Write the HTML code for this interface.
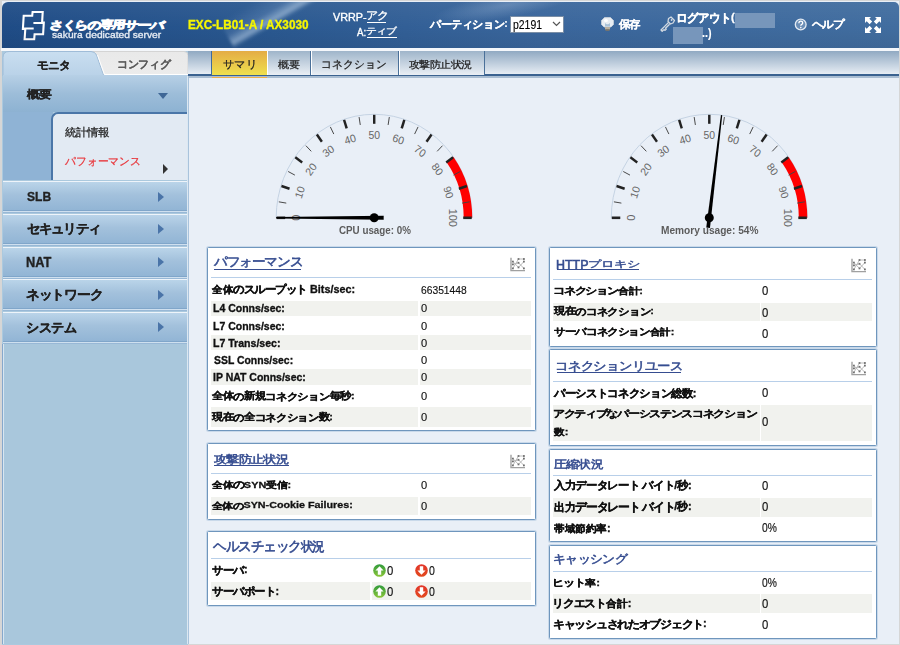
<!DOCTYPE html>
<html lang="ja">
<head>
<meta charset="utf-8">
<style>
*{box-sizing:border-box}
html,body{margin:0;padding:0}
body{width:900px;height:645px;overflow:hidden;position:relative;background:#e9eff7;font-family:"Liberation Sans",sans-serif;color:#111}
.a{position:absolute}
.t{position:absolute;white-space:nowrap;transform-origin:0 0;line-height:1}
#frame{left:0;top:0;width:900px;height:645px;border:1px solid #d6d6d6;border-left-width:2px}
#hdr{left:2px;top:2px;width:897px;height:46px;border-radius:6px 5px 0 0;
 background:linear-gradient(90deg,#1f4c86 0%,#2a5890 30%,#3a669c 60%,#416d9f 100%);overflow:hidden}
#strip{left:1px;top:48px;width:898px;height:3px;background:#f4f7fb}
#side{left:2px;top:51px;width:186px;height:594px;background:#abc9de}
#tabmon{left:3px;top:51px;width:100px;height:25px;border-radius:6px 8px 0 0;background:linear-gradient(#c8ddef,#bad3e8);border:1px solid #8fb0cf;border-bottom:none}
#tabcfg{left:98px;top:51px;width:90px;height:24px;background:#e6e6e6;border-radius:0 5px 0 0;border-top:1px solid #d0d0d0}
#gaiyo{left:3px;top:75px;width:185px;height:37px;background:linear-gradient(#b7d0e6 0%,#9dbdd9 50%,#8db2d2 100%)}
#subleft{left:3px;top:112px;width:50px;height:68px;background:#8fb3d5}
#sub{left:51px;top:112px;width:137px;height:68px;background:#e2eaf3;border-radius:7px 0 0 0;border-left:2px solid #4a76a8;border-top:2px solid #4a76a8}
.mrow{left:3px;width:184px;height:30px;background:linear-gradient(#bad4e9 0%,#a3c1dc 45%,#92b5d5 100%);border-top:1px solid #eef4fa;border-bottom:1px solid #80a6ca;box-shadow:0 1px 0 #cfe0ef,0 2px 0 #98b8d6}
.arr{width:0;height:0;border-top:5px solid transparent;border-bottom:5px solid transparent;border-left:6px solid #4a74a8}
#stbar{left:188px;top:51px;width:711px;height:27px;background:linear-gradient(#90a9c2 0%,#e7edf4 85%,#3b6290 85%,#3b6290 93%,#a9bdd2 93%,#a9bdd2 100%)}
.stab{top:51px;height:24px;background:linear-gradient(#9fb5ca,#eaeff5);border-right:1px solid #4a7099;box-shadow:inset 1px 0 0 #fff}
#stsel{left:211px;top:51px;width:56px;height:24px;background:linear-gradient(#e4ac45,#efe04e);border-left:1px solid #3f6a9e}
#stund{left:212px;top:76.5px;width:55px;height:1.8px;background:#f0b04a}
.pan{position:absolute;background:#fff;border:1px solid #6f96bd;border-radius:1.5px;box-shadow:0 0 0 1px #c9d9ea}
.sep{position:absolute;height:1px;background:#b8cfe9}
.st{position:absolute;background:#f1f2ee}
.ic{position:absolute}
</style>
</head>
<body>
<div id="frame" class="a"></div>
<div id="hdr" class="a"></div>
<div id="strip" class="a"></div>

<!-- logo -->
<svg class="a" style="left:0;top:0" width="60" height="48">
 <path d="M32.6 12 H42.7 L42.1 22.6 H43.8 L43.1 34.2 H34.6 L34.2 39.2 H24.6 L25.3 29.0 H22.9 L23.7 15.8 H32.2 Z" fill="none" stroke="#fff" stroke-width="2.1" stroke-linejoin="miter"/>
 <path d="M33.4 22.9 H43.8 M22.9 28.6 H33.7" stroke="#fff" stroke-width="2"/>
</svg>
<div class="a" style="left:2px;top:2px;width:897px;height:46px;overflow:hidden;border-radius:6px 5px 0 0;background:linear-gradient(180deg,rgba(255,255,255,.05) 0%,rgba(255,255,255,0) 55%,rgba(0,0,0,.06) 100%)"><div class="a" style="left:430px;top:-10px;width:150px;height:26px;transform:rotate(-10deg);background:radial-gradient(ellipse at 50% 50%,rgba(190,210,235,.28) 0%,rgba(190,210,235,0) 70%)"></div><div class="a" style="left:255px;top:-45px;width:40px;height:110px;transform:rotate(60deg);background:linear-gradient(90deg,rgba(170,198,230,0) 0%,rgba(170,198,230,.18) 40%,rgba(200,220,240,.55) 62%,rgba(170,198,230,0) 75%);filter:blur(1.5px)"></div></div>
<div class="a" style="left:510px;top:16px;width:54px;height:17px;background:#fff;border:1px solid #7a8ea6"></div>
<svg class="a" style="left:552px;top:21px" width="9" height="6" viewBox="0 0 9 6"><path d="M1 1 L4.5 4.5 L8 1" fill="none" stroke="#555" stroke-width="1.2"/></svg>
<svg class="a" style="left:600px;top:16px" width="16" height="16" viewBox="0 0 16 16">
 <path d="M4.5 1.5 H10.5 L13.5 4.5 V8.5 L11 11 H4 L1.5 8.5 V4.5 Z" fill="#e8edf2" stroke="#c9d2da" stroke-width="0.8"/>
 <path d="M5 7 Q7.5 9.5 10 7 V10.5 H5 Z" fill="#a9c2d8"/>
 <ellipse cx="6" cy="4.5" rx="2" ry="1.6" fill="#fff"/>
 <rect x="5" y="11" width="5" height="2.5" fill="#b8b0a0"/><rect x="5.5" y="13.3" width="4" height="1.4" fill="#8a7a60"/>
</svg>
<svg class="a" style="left:659px;top:16px" width="17" height="17" viewBox="0 0 17 17">
 <g fill="none" stroke="#d3dae2" stroke-width="1.3" stroke-linejoin="round">
 <path d="M9.5 2.5 L12 1 L15.5 4.5 L14 7 L11.5 8 L9 5.5 Z"/>
 <path d="M9.6 6.4 L2 14 L3.2 15.3 L5 13.6 L6 14.4 L7.2 13.2 L6.5 12.2 L10.6 8.2"/>
 </g>
 <circle cx="12.6" cy="4" r="0.9" fill="#d3dae2"/>
</svg>
<div class="a" style="left:735px;top:12.5px;width:40px;height:15.5px;background:#7796bb;filter:blur(0.6px)"></div>
<div class="a" style="left:673px;top:27px;width:30px;height:17px;background:#7796bb;filter:blur(0.6px)"></div>
<svg class="a" style="left:794px;top:17.5px" width="14" height="14" viewBox="0 0 14 14">
 <circle cx="6.7" cy="6.5" r="5.4" fill="rgba(190,210,230,.35)" stroke="#e4ebf3" stroke-width="1.3"/>
 <path d="M4.9 5.2 Q4.9 3.2 6.8 3.2 Q8.7 3.2 8.7 4.9 Q8.7 6 7.4 6.6 Q6.8 6.9 6.8 7.8" fill="none" stroke="#fff" stroke-width="1.3"/>
 <circle cx="6.8" cy="9.6" r="0.8" fill="#fff"/>
</svg>
<svg class="a" style="left:865px;top:17px" width="16" height="16" viewBox="0 0 16 16" fill="#fff">
 <path d="M0 0 H6 L4.3 1.7 L7.2 4.6 L4.6 7.2 L1.7 4.3 L0 6 Z"/>
 <path d="M16 0 V6 L14.3 4.3 L11.4 7.2 L8.8 4.6 L11.7 1.7 L10 0 Z"/>
 <path d="M0 16 V10 L1.7 11.7 L4.6 8.8 L7.2 11.4 L4.3 14.3 L6 16 Z"/>
 <path d="M16 16 H10 L11.7 14.3 L8.8 11.4 L11.4 8.8 L14.3 11.7 L16 10 Z"/>
</svg>

<!-- SIDEBAR -->
<div id="side" class="a"></div>
<svg class="a" style="left:0;top:0" width="200" height="80">
 <defs><linearGradient id="tmg" x1="0" y1="0" x2="0" y2="1"><stop offset="0" stop-color="#c9def0"/><stop offset="1" stop-color="#b9d2e8"/></linearGradient>
 <linearGradient id="tcg" x1="0" y1="0" x2="0" y2="1"><stop offset="0" stop-color="#e9e9e9"/><stop offset="1" stop-color="#ececec"/></linearGradient></defs>
 <path d="M90 51.5 H184 Q188 51.5 188 55.5 V75.5 H102 Z" fill="url(#tcg)" stroke="#d4d4d4" stroke-width="1"/>
 <path d="M3 76 V57.5 Q3 51.5 9 51.5 H91 Q95 51.5 96.5 55 L103.5 75.5 H188 V76 Z" fill="url(#tmg)"/>
 <path d="M3 76 V57.5 Q3 51.5 9 51.5 H91 Q95 51.5 96.5 55 L103.5 75" fill="none" stroke="#9fbcd8" stroke-width="1"/>
 <path d="M97.5 55 L104.5 74.5 H188" fill="none" stroke="#fff" stroke-width="1"/>
 <path d="M104 75.5 H188" fill="none" stroke="#86a8cb" stroke-width="1"/>
</svg>
<div id="gaiyo" class="a"></div>
<div class="a" style="left:157.7px;top:92.5px;width:0;height:0;border-left:5px solid transparent;border-right:5px solid transparent;border-top:6px solid #3f6796"></div>
<div id="subleft" class="a"></div>
<div id="sub" class="a"></div>
<div class="a" style="left:163px;top:164px;width:0;height:0;border-top:5px solid transparent;border-bottom:5px solid transparent;border-left:5px solid #333"></div>
<div class="mrow a" style="top:181px"></div><div class="a arr" style="left:158px;top:192px"></div>
<div class="mrow a" style="top:214px"></div><div class="a arr" style="left:158px;top:224px"></div>
<div class="mrow a" style="top:247px"></div><div class="a arr" style="left:158px;top:257px"></div>
<div class="mrow a" style="top:279px"></div><div class="a arr" style="left:158px;top:290px"></div>
<div class="mrow a" style="top:312px"></div><div class="a arr" style="left:158px;top:322px"></div>
<div class="a" style="left:2px;top:344px;width:185px;height:300px;background:#a9c7dc;border-left:1px solid #86a8cc;box-shadow:inset 1px 0 0 #d8e6f1"></div>

<div class="a" style="left:187px;top:76px;width:1px;height:568px;background:#dce8f2"></div><div class="a" style="left:188px;top:78px;width:1px;height:566px;background:#a9c3dc"></div>
<!-- SUBTABS -->
<div id="stbar" class="a"></div>
<div id="stsel" class="a"></div><div id="stund" class="a"></div>
<div class="stab a" style="left:267px;width:44px"></div>
<div class="stab a" style="left:311px;width:88px"></div>
<div class="stab a" style="left:399px;width:86px"></div>

<!-- PANELS -->
<div class="pan" style="left:207px;top:247px;width:329px;height:184px"></div>
<div class="sep" style="left:211px;top:277px;width:320px"></div>
<div class="st" style="left:211px;top:300.6px;width:207px;height:15.3px"></div><div class="st" style="left:420px;top:300.6px;width:111px;height:15.3px"></div>
<div class="st" style="left:211px;top:334.7px;width:207px;height:15.7px"></div><div class="st" style="left:420px;top:334.7px;width:111px;height:15.7px"></div>
<div class="st" style="left:211px;top:369.3px;width:207px;height:15.5px"></div><div class="st" style="left:420px;top:369.3px;width:111px;height:15.5px"></div>
<div class="st" style="left:211px;top:407.4px;width:207px;height:19.3px"></div><div class="st" style="left:420px;top:407.4px;width:111px;height:19.3px"></div>

<div class="pan" style="left:207px;top:443px;width:329px;height:77px"></div>
<div class="sep" style="left:211px;top:473px;width:320px"></div>
<div class="st" style="left:211px;top:496.8px;width:207px;height:18.7px"></div><div class="st" style="left:420px;top:496.8px;width:111px;height:18.7px"></div>

<div class="pan" style="left:207px;top:531px;width:329px;height:75px"></div>
<div class="sep" style="left:211px;top:558px;width:320px"></div>
<div class="st" style="left:211px;top:581.5px;width:159.4px;height:18.9px"></div><div class="st" style="left:372.4px;top:581.5px;width:158.6px;height:18.9px"></div>

<div class="pan" style="left:549px;top:247px;width:328px;height:100px"></div>
<div class="sep" style="left:553px;top:279px;width:319px"></div>
<div class="st" style="left:553px;top:303px;width:207px;height:18px"></div><div class="st" style="left:761.3px;top:303px;width:110.7px;height:18px"></div>

<div class="pan" style="left:549px;top:349px;width:328px;height:97px"></div>
<div class="sep" style="left:553px;top:381px;width:319px"></div>
<div class="st" style="left:553px;top:404.8px;width:207px;height:35.9px"></div><div class="st" style="left:761.3px;top:404.8px;width:110.7px;height:35.9px"></div>

<div class="pan" style="left:549px;top:449px;width:328px;height:93px"></div>
<div class="sep" style="left:553px;top:475px;width:319px"></div>
<div class="st" style="left:553px;top:498px;width:207px;height:19px"></div><div class="st" style="left:761.3px;top:498px;width:110.7px;height:19px"></div>

<div class="pan" style="left:549px;top:545px;width:328px;height:94px"></div>
<div class="sep" style="left:553px;top:571px;width:319px"></div>
<div class="st" style="left:553px;top:594.2px;width:207px;height:19px"></div><div class="st" style="left:761.3px;top:594.2px;width:110.7px;height:19px"></div>

<div class="a" style="left:214px;top:269px;width:87.3px;height:1px;background:#364d90"></div>
<div class="a" style="left:214px;top:465px;width:74.5px;height:1px;background:#364d90"></div>
<div class="a" style="left:556.7px;top:269px;width:82.2px;height:1px;background:#364d90"></div>
<div class="a" style="left:556.7px;top:371.8px;width:124.5px;height:1px;background:#364d90"></div>
<div class="a" style="left:366.7px;top:22px;width:19.7px;height:1px;background:#fff"></div>
<div class="a" style="left:366.7px;top:37px;width:30px;height:1px;background:#fff"></div>
<svg class="ic" style="left:509.5px;top:257px" width="16" height="15" viewBox="0 0 16 15"><path d="M1 0.8 V13.6 H15" fill="none" stroke="#a0a0a0" stroke-width="1.4"/><path d="M2.9 4.6 L8.5 10.4 L13.9 4.6 M2.9 11.4 L8.5 2 L13.9 2 M2.9 7.4 L8.5 5.8 L13.9 11.4" fill="none" stroke="#b3b3b3" stroke-width="0.9"/><rect x="2.0" y="3.6999999999999997" width="1.8" height="1.8" fill="#707070"/><rect x="2.0" y="6.5" width="1.8" height="1.8" fill="#707070"/><rect x="2.0" y="10.5" width="1.8" height="1.8" fill="#707070"/><rect x="7.6" y="1.1" width="1.8" height="1.8" fill="#707070"/><rect x="7.6" y="4.8999999999999995" width="1.8" height="1.8" fill="#707070"/><rect x="7.6" y="9.5" width="1.8" height="1.8" fill="#707070"/><rect x="13.0" y="1.1" width="1.8" height="1.8" fill="#707070"/><rect x="13.0" y="3.6999999999999997" width="1.8" height="1.8" fill="#707070"/><rect x="13.0" y="10.5" width="1.8" height="1.8" fill="#707070"/></svg><svg class="ic" style="left:509.5px;top:454px" width="16" height="15" viewBox="0 0 16 15"><path d="M1 0.8 V13.6 H15" fill="none" stroke="#a0a0a0" stroke-width="1.4"/><path d="M2.9 4.6 L8.5 10.4 L13.9 4.6 M2.9 11.4 L8.5 2 L13.9 2 M2.9 7.4 L8.5 5.8 L13.9 11.4" fill="none" stroke="#b3b3b3" stroke-width="0.9"/><rect x="2.0" y="3.6999999999999997" width="1.8" height="1.8" fill="#707070"/><rect x="2.0" y="6.5" width="1.8" height="1.8" fill="#707070"/><rect x="2.0" y="10.5" width="1.8" height="1.8" fill="#707070"/><rect x="7.6" y="1.1" width="1.8" height="1.8" fill="#707070"/><rect x="7.6" y="4.8999999999999995" width="1.8" height="1.8" fill="#707070"/><rect x="7.6" y="9.5" width="1.8" height="1.8" fill="#707070"/><rect x="13.0" y="1.1" width="1.8" height="1.8" fill="#707070"/><rect x="13.0" y="3.6999999999999997" width="1.8" height="1.8" fill="#707070"/><rect x="13.0" y="10.5" width="1.8" height="1.8" fill="#707070"/></svg><svg class="ic" style="left:850.5px;top:258px" width="16" height="15" viewBox="0 0 16 15"><path d="M1 0.8 V13.6 H15" fill="none" stroke="#a0a0a0" stroke-width="1.4"/><path d="M2.9 4.6 L8.5 10.4 L13.9 4.6 M2.9 11.4 L8.5 2 L13.9 2 M2.9 7.4 L8.5 5.8 L13.9 11.4" fill="none" stroke="#b3b3b3" stroke-width="0.9"/><rect x="2.0" y="3.6999999999999997" width="1.8" height="1.8" fill="#707070"/><rect x="2.0" y="6.5" width="1.8" height="1.8" fill="#707070"/><rect x="2.0" y="10.5" width="1.8" height="1.8" fill="#707070"/><rect x="7.6" y="1.1" width="1.8" height="1.8" fill="#707070"/><rect x="7.6" y="4.8999999999999995" width="1.8" height="1.8" fill="#707070"/><rect x="7.6" y="9.5" width="1.8" height="1.8" fill="#707070"/><rect x="13.0" y="1.1" width="1.8" height="1.8" fill="#707070"/><rect x="13.0" y="3.6999999999999997" width="1.8" height="1.8" fill="#707070"/><rect x="13.0" y="10.5" width="1.8" height="1.8" fill="#707070"/></svg><svg class="ic" style="left:850.5px;top:360.5px" width="16" height="15" viewBox="0 0 16 15"><path d="M1 0.8 V13.6 H15" fill="none" stroke="#a0a0a0" stroke-width="1.4"/><path d="M2.9 4.6 L8.5 10.4 L13.9 4.6 M2.9 11.4 L8.5 2 L13.9 2 M2.9 7.4 L8.5 5.8 L13.9 11.4" fill="none" stroke="#b3b3b3" stroke-width="0.9"/><rect x="2.0" y="3.6999999999999997" width="1.8" height="1.8" fill="#707070"/><rect x="2.0" y="6.5" width="1.8" height="1.8" fill="#707070"/><rect x="2.0" y="10.5" width="1.8" height="1.8" fill="#707070"/><rect x="7.6" y="1.1" width="1.8" height="1.8" fill="#707070"/><rect x="7.6" y="4.8999999999999995" width="1.8" height="1.8" fill="#707070"/><rect x="7.6" y="9.5" width="1.8" height="1.8" fill="#707070"/><rect x="13.0" y="1.1" width="1.8" height="1.8" fill="#707070"/><rect x="13.0" y="3.6999999999999997" width="1.8" height="1.8" fill="#707070"/><rect x="13.0" y="10.5" width="1.8" height="1.8" fill="#707070"/></svg><svg class="ic" style="left:373.3px;top:563.6px" width="13" height="13" viewBox="0 0 13 13"><defs><linearGradient id="gg" x1="0" y1="0" x2="0" y2="1"><stop offset="0" stop-color="#2f9a3c"/><stop offset="1" stop-color="#8cc63a"/></linearGradient><linearGradient id="rg" x1="0" y1="0" x2="0" y2="1"><stop offset="0" stop-color="#e2352a"/><stop offset="1" stop-color="#e24a1e"/></linearGradient></defs><circle cx="6.5" cy="6.5" r="6.3" fill="url(#gg)"/><path d="M6.5 2.2 L10.6 6.4 L8.2 6.4 L8.2 10.8 L4.8 10.8 L4.8 6.4 L2.4 6.4 Z" fill="#fff"/></svg><svg class="ic" style="left:414.6px;top:563.6px" width="13" height="13" viewBox="0 0 13 13"><defs><linearGradient id="gg" x1="0" y1="0" x2="0" y2="1"><stop offset="0" stop-color="#2f9a3c"/><stop offset="1" stop-color="#8cc63a"/></linearGradient><linearGradient id="rg" x1="0" y1="0" x2="0" y2="1"><stop offset="0" stop-color="#e2352a"/><stop offset="1" stop-color="#e24a1e"/></linearGradient></defs><circle cx="6.5" cy="6.5" r="6.3" fill="url(#rg)"/><path d="M6.5 10.8 L10.6 6.6 L8.2 6.6 L8.2 2.2 L4.8 2.2 L4.8 6.6 L2.4 6.6 Z" fill="#fff"/></svg><svg class="ic" style="left:373.3px;top:584.6px" width="13" height="13" viewBox="0 0 13 13"><defs><linearGradient id="gg" x1="0" y1="0" x2="0" y2="1"><stop offset="0" stop-color="#2f9a3c"/><stop offset="1" stop-color="#8cc63a"/></linearGradient><linearGradient id="rg" x1="0" y1="0" x2="0" y2="1"><stop offset="0" stop-color="#e2352a"/><stop offset="1" stop-color="#e24a1e"/></linearGradient></defs><circle cx="6.5" cy="6.5" r="6.3" fill="url(#gg)"/><path d="M6.5 2.2 L10.6 6.4 L8.2 6.4 L8.2 10.8 L4.8 10.8 L4.8 6.4 L2.4 6.4 Z" fill="#fff"/></svg><svg class="ic" style="left:414.6px;top:584.6px" width="13" height="13" viewBox="0 0 13 13"><defs><linearGradient id="gg" x1="0" y1="0" x2="0" y2="1"><stop offset="0" stop-color="#2f9a3c"/><stop offset="1" stop-color="#8cc63a"/></linearGradient><linearGradient id="rg" x1="0" y1="0" x2="0" y2="1"><stop offset="0" stop-color="#e2352a"/><stop offset="1" stop-color="#e24a1e"/></linearGradient></defs><circle cx="6.5" cy="6.5" r="6.3" fill="url(#rg)"/><path d="M6.5 10.8 L10.6 6.6 L8.2 6.6 L8.2 2.2 L4.8 2.2 L4.8 6.6 L2.4 6.6 Z" fill="#fff"/></svg>
<svg class="a" style="left:0;top:0" width="900" height="645"><g transform="translate(374.2,217.8) scale(0.947,1)">
<path d="M-103.50 -0.00 A103.5 103.5 0 0 1 103.50 -0.00" fill="none" stroke="#c3d2e2" stroke-width="1"/>
<path d="M83.73 -60.84 A103.5 103.5 0 0 1 103.50 -0.00 L94.50 -0.00 A94.5 94.5 0 0 0 76.45 -55.55 Z" fill="#ff0000"/>
<line x1="-103.00" y1="-0.00" x2="-94.00" y2="-0.00" stroke="#222" stroke-width="2.6"/>
<line x1="-100.74" y1="-15.96" x2="-92.84" y2="-14.70" stroke="#444" stroke-width="1"/>
<line x1="-97.96" y1="-31.83" x2="-89.40" y2="-29.05" stroke="#222" stroke-width="2.6"/>
<line x1="-90.88" y1="-46.31" x2="-83.75" y2="-42.68" stroke="#444" stroke-width="1"/>
<line x1="-83.33" y1="-60.54" x2="-76.05" y2="-55.25" stroke="#222" stroke-width="2.6"/>
<line x1="-72.12" y1="-72.12" x2="-66.47" y2="-66.47" stroke="#444" stroke-width="1"/>
<line x1="-60.54" y1="-83.33" x2="-55.25" y2="-76.05" stroke="#222" stroke-width="2.6"/>
<line x1="-46.31" y1="-90.88" x2="-42.68" y2="-83.75" stroke="#444" stroke-width="1"/>
<line x1="-31.83" y1="-97.96" x2="-29.05" y2="-89.40" stroke="#222" stroke-width="2.6"/>
<line x1="-15.96" y1="-100.74" x2="-14.70" y2="-92.84" stroke="#444" stroke-width="1"/>
<line x1="0.00" y1="-103.00" x2="0.00" y2="-94.00" stroke="#222" stroke-width="2.6"/>
<line x1="15.96" y1="-100.74" x2="14.70" y2="-92.84" stroke="#444" stroke-width="1"/>
<line x1="31.83" y1="-97.96" x2="29.05" y2="-89.40" stroke="#222" stroke-width="2.6"/>
<line x1="46.31" y1="-90.88" x2="42.68" y2="-83.75" stroke="#444" stroke-width="1"/>
<line x1="60.54" y1="-83.33" x2="55.25" y2="-76.05" stroke="#222" stroke-width="2.6"/>
<line x1="72.12" y1="-72.12" x2="66.47" y2="-66.47" stroke="#444" stroke-width="1"/>
<line x1="83.33" y1="-60.54" x2="76.05" y2="-55.25" stroke="#222" stroke-width="2.6"/>
<line x1="90.88" y1="-46.31" x2="83.75" y2="-42.68" stroke="#444" stroke-width="1"/>
<line x1="97.96" y1="-31.83" x2="89.40" y2="-29.05" stroke="#222" stroke-width="2.6"/>
<line x1="100.74" y1="-15.96" x2="92.84" y2="-14.70" stroke="#444" stroke-width="1"/>
<line x1="103.00" y1="-0.00" x2="94.00" y2="-0.00" stroke="#222" stroke-width="2.6"/>
<text x="0" y="0" transform="translate(-82.80,-0.00) rotate(-90.0)" font-family="Liberation Sans" font-size="11" fill="#666" text-anchor="middle" dominant-baseline="central">0</text>
<text x="0" y="0" transform="translate(-78.75,-25.59) rotate(-72.0)" font-family="Liberation Sans" font-size="11" fill="#666" text-anchor="middle" dominant-baseline="central">10</text>
<text x="0" y="0" transform="translate(-66.99,-48.67) rotate(-54.0)" font-family="Liberation Sans" font-size="11" fill="#666" text-anchor="middle" dominant-baseline="central">20</text>
<text x="0" y="0" transform="translate(-48.67,-66.99) rotate(-36.0)" font-family="Liberation Sans" font-size="11" fill="#666" text-anchor="middle" dominant-baseline="central">30</text>
<text x="0" y="0" transform="translate(-25.59,-78.75) rotate(-18.0)" font-family="Liberation Sans" font-size="11" fill="#666" text-anchor="middle" dominant-baseline="central">40</text>
<text x="0" y="0" transform="translate(0.00,-82.80) rotate(0.0)" font-family="Liberation Sans" font-size="11" fill="#666" text-anchor="middle" dominant-baseline="central">50</text>
<text x="0" y="0" transform="translate(25.59,-78.75) rotate(18.0)" font-family="Liberation Sans" font-size="11" fill="#666" text-anchor="middle" dominant-baseline="central">60</text>
<text x="0" y="0" transform="translate(48.67,-66.99) rotate(36.0)" font-family="Liberation Sans" font-size="11" fill="#666" text-anchor="middle" dominant-baseline="central">70</text>
<text x="0" y="0" transform="translate(66.99,-48.67) rotate(54.0)" font-family="Liberation Sans" font-size="11" fill="#666" text-anchor="middle" dominant-baseline="central">80</text>
<text x="0" y="0" transform="translate(78.75,-25.59) rotate(72.0)" font-family="Liberation Sans" font-size="11" fill="#666" text-anchor="middle" dominant-baseline="central">90</text>
<text x="0" y="0" transform="translate(82.80,-0.00) rotate(90.0)" font-family="Liberation Sans" font-size="11" fill="#666" text-anchor="middle" dominant-baseline="central">100</text>
<path d="M10.00 -2.00 L-103.50 -0.70 L-103.50 0.70 L10.00 2.00 Z" fill="#000"/>
</g>
<circle cx="374.2" cy="217.8" r="4.5" fill="#000"/><g transform="translate(709.3,217.8) scale(0.947,1)">
<path d="M-103.50 -0.00 A103.5 103.5 0 0 1 103.50 -0.00" fill="none" stroke="#c3d2e2" stroke-width="1"/>
<path d="M83.73 -60.84 A103.5 103.5 0 0 1 103.50 -0.00 L94.50 -0.00 A94.5 94.5 0 0 0 76.45 -55.55 Z" fill="#ff0000"/>
<line x1="-103.00" y1="-0.00" x2="-94.00" y2="-0.00" stroke="#222" stroke-width="2.6"/>
<line x1="-100.74" y1="-15.96" x2="-92.84" y2="-14.70" stroke="#444" stroke-width="1"/>
<line x1="-97.96" y1="-31.83" x2="-89.40" y2="-29.05" stroke="#222" stroke-width="2.6"/>
<line x1="-90.88" y1="-46.31" x2="-83.75" y2="-42.68" stroke="#444" stroke-width="1"/>
<line x1="-83.33" y1="-60.54" x2="-76.05" y2="-55.25" stroke="#222" stroke-width="2.6"/>
<line x1="-72.12" y1="-72.12" x2="-66.47" y2="-66.47" stroke="#444" stroke-width="1"/>
<line x1="-60.54" y1="-83.33" x2="-55.25" y2="-76.05" stroke="#222" stroke-width="2.6"/>
<line x1="-46.31" y1="-90.88" x2="-42.68" y2="-83.75" stroke="#444" stroke-width="1"/>
<line x1="-31.83" y1="-97.96" x2="-29.05" y2="-89.40" stroke="#222" stroke-width="2.6"/>
<line x1="-15.96" y1="-100.74" x2="-14.70" y2="-92.84" stroke="#444" stroke-width="1"/>
<line x1="0.00" y1="-103.00" x2="0.00" y2="-94.00" stroke="#222" stroke-width="2.6"/>
<line x1="15.96" y1="-100.74" x2="14.70" y2="-92.84" stroke="#444" stroke-width="1"/>
<line x1="31.83" y1="-97.96" x2="29.05" y2="-89.40" stroke="#222" stroke-width="2.6"/>
<line x1="46.31" y1="-90.88" x2="42.68" y2="-83.75" stroke="#444" stroke-width="1"/>
<line x1="60.54" y1="-83.33" x2="55.25" y2="-76.05" stroke="#222" stroke-width="2.6"/>
<line x1="72.12" y1="-72.12" x2="66.47" y2="-66.47" stroke="#444" stroke-width="1"/>
<line x1="83.33" y1="-60.54" x2="76.05" y2="-55.25" stroke="#222" stroke-width="2.6"/>
<line x1="90.88" y1="-46.31" x2="83.75" y2="-42.68" stroke="#444" stroke-width="1"/>
<line x1="97.96" y1="-31.83" x2="89.40" y2="-29.05" stroke="#222" stroke-width="2.6"/>
<line x1="100.74" y1="-15.96" x2="92.84" y2="-14.70" stroke="#444" stroke-width="1"/>
<line x1="103.00" y1="-0.00" x2="94.00" y2="-0.00" stroke="#222" stroke-width="2.6"/>
<text x="0" y="0" transform="translate(-82.80,-0.00) rotate(-90.0)" font-family="Liberation Sans" font-size="11" fill="#666" text-anchor="middle" dominant-baseline="central">0</text>
<text x="0" y="0" transform="translate(-78.75,-25.59) rotate(-72.0)" font-family="Liberation Sans" font-size="11" fill="#666" text-anchor="middle" dominant-baseline="central">10</text>
<text x="0" y="0" transform="translate(-66.99,-48.67) rotate(-54.0)" font-family="Liberation Sans" font-size="11" fill="#666" text-anchor="middle" dominant-baseline="central">20</text>
<text x="0" y="0" transform="translate(-48.67,-66.99) rotate(-36.0)" font-family="Liberation Sans" font-size="11" fill="#666" text-anchor="middle" dominant-baseline="central">30</text>
<text x="0" y="0" transform="translate(-25.59,-78.75) rotate(-18.0)" font-family="Liberation Sans" font-size="11" fill="#666" text-anchor="middle" dominant-baseline="central">40</text>
<text x="0" y="0" transform="translate(0.00,-82.80) rotate(0.0)" font-family="Liberation Sans" font-size="11" fill="#666" text-anchor="middle" dominant-baseline="central">50</text>
<text x="0" y="0" transform="translate(25.59,-78.75) rotate(18.0)" font-family="Liberation Sans" font-size="11" fill="#666" text-anchor="middle" dominant-baseline="central">60</text>
<text x="0" y="0" transform="translate(48.67,-66.99) rotate(36.0)" font-family="Liberation Sans" font-size="11" fill="#666" text-anchor="middle" dominant-baseline="central">70</text>
<text x="0" y="0" transform="translate(66.99,-48.67) rotate(54.0)" font-family="Liberation Sans" font-size="11" fill="#666" text-anchor="middle" dominant-baseline="central">80</text>
<text x="0" y="0" transform="translate(78.75,-25.59) rotate(72.0)" font-family="Liberation Sans" font-size="11" fill="#666" text-anchor="middle" dominant-baseline="central">90</text>
<text x="0" y="0" transform="translate(82.80,-0.00) rotate(90.0)" font-family="Liberation Sans" font-size="11" fill="#666" text-anchor="middle" dominant-baseline="central">100</text>
<path d="M0.73 10.17 L13.67 -102.60 L12.28 -102.77 L-3.24 9.67 Z" fill="#000"/>
</g>
<circle cx="709.3" cy="217.8" r="4.5" fill="#000"/></svg>
<div class="t" style="left:50.07px;top:20.11px;font-size:17px;font-weight:bold;color:#fff;transform:scale(0.7627,0.6053) skewX(-7deg);-webkit-text-stroke:1.5px #fff;"><span style="letter-spacing:-0.07em"><span style="font-size:1.08em;letter-spacing:-0.06em;vertical-align:-0.03em">さくらの</span>専用<span style="font-size:1.08em;letter-spacing:-0.06em;vertical-align:-0.03em">サーバ</span></span></div>
<div class="t" style="left:52.40px;top:31.94px;font-size:8px;color:#e4eaf2;transform:scale(1.2776,1.0600);-webkit-text-stroke:0.3px #e4eaf2;">sakura dedicated server</div>
<div class="t" style="left:188.40px;top:17.93px;font-size:13px;font-weight:bold;color:#f6f600;transform:scale(0.9030,1.0333);-webkit-text-stroke:0.35px #f6f600;">EXC-LB01-A / AX3030</div>
<div class="t" style="left:332.80px;top:12.43px;font-size:12px;color:#fff;transform:scale(0.9000,0.8667);-webkit-text-stroke:0.4px #fff;">VRRP-</div>
<div class="t" style="left:365.80px;top:11.38px;font-size:12px;color:#fff;transform:scale(0.8955,0.8182);-webkit-text-stroke:0.4px #fff;"><span style="letter-spacing:-0.07em"><span style="font-size:1.08em;letter-spacing:-0.06em;vertical-align:-0.03em">アク</span></span></div>
<div class="t" style="left:356.70px;top:26.64px;font-size:12px;color:#fff;transform:scale(0.8091,0.8556);-webkit-text-stroke:0.4px #fff;">A:</div>
<div class="t" style="left:365.87px;top:27.19px;font-size:12px;color:#fff;transform:scale(0.8333,0.6923);-webkit-text-stroke:0.4px #fff;"><span style="letter-spacing:-0.07em"><span style="font-size:1.08em;letter-spacing:-0.06em;vertical-align:-0.03em">ティブ</span></span></div>
<div class="t" style="left:430.11px;top:18.10px;font-size:13px;font-weight:bold;color:#fff;transform:scale(0.8062,0.8000);-webkit-text-stroke:0.25px #fff;"><span style="letter-spacing:-0.07em"><span style="font-size:1.08em;letter-spacing:-0.06em;vertical-align:-0.03em">パーティション</span></span>:</div>
<div class="t" style="left:513.10px;top:17.50px;font-size:13px;color:#000;transform:scale(0.8029,1.0000);-webkit-text-stroke:0.15px #000;">p2191</div>
<div class="t" style="left:619.00px;top:18.60px;font-size:13px;font-weight:bold;color:#fff;transform:scale(0.8400,0.8077);-webkit-text-stroke:0.2px #fff;"><span style="letter-spacing:-0.07em">保存</span></div>
<div class="t" style="left:676.13px;top:11.13px;font-size:13px;font-weight:bold;color:#fff;transform:scale(0.8368,0.8714);-webkit-text-stroke:0.35px #fff;"><span style="letter-spacing:-0.07em"><span style="font-size:1.08em;letter-spacing:-0.06em;vertical-align:-0.03em">ログアウト</span></span>(</div>
<div class="t" style="left:701.98px;top:26.62px;font-size:13px;font-weight:bold;color:#fff;transform:scale(0.8200,0.9417);-webkit-text-stroke:0.15px #fff;">..)</div>
<div class="t" style="left:812.00px;top:18.75px;font-size:13px;font-weight:bold;color:#fff;transform:scale(0.7927,0.7500);-webkit-text-stroke:0.25px #fff;"><span style="letter-spacing:-0.07em"><span style="font-size:1.08em;letter-spacing:-0.06em;vertical-align:-0.03em">ヘルプ</span></span></div>
<div class="t" style="left:36.70px;top:58.73px;font-size:13px;font-weight:bold;color:#222;transform:scale(0.8184,0.7692);-webkit-text-stroke:0.35px #222;"><span style="letter-spacing:-0.07em"><span style="font-size:1.08em;letter-spacing:-0.06em;vertical-align:-0.03em">モニタ</span></span></div>
<div class="t" style="left:117.38px;top:58.19px;font-size:13px;font-weight:bold;color:#5a5a5a;transform:scale(0.8106,0.8077);-webkit-text-stroke:0.1px #5a5a5a;"><span style="letter-spacing:-0.07em"><span style="font-size:1.08em;letter-spacing:-0.06em;vertical-align:-0.03em">コンフィグ</span></span></div>
<div class="t" style="left:26.80px;top:88.50px;font-size:13px;font-weight:bold;color:#222;transform:scale(0.9920,0.8462);-webkit-text-stroke:0.35px #222;"><span style="letter-spacing:-0.07em">概要</span></div>
<div class="t" style="left:64.90px;top:126.66px;font-size:12.5px;color:#222;transform:scale(0.9000,0.8615);-webkit-text-stroke:0.3px #222;"><span style="letter-spacing:-0.07em">統計情報</span></div>
<div class="t" style="left:64.90px;top:155.16px;font-size:12.5px;color:#e8353a;transform:scale(0.8242,0.8417);-webkit-text-stroke:0.3px #e8353a;"><span style="letter-spacing:-0.07em"><span style="font-size:1.08em;letter-spacing:-0.06em;vertical-align:-0.03em">パフォーマンス</span></span></div>
<div class="t" style="left:27.20px;top:190.38px;font-size:13px;font-weight:bold;color:#222;transform:scale(0.9269,1.0111);-webkit-text-stroke:0.35px #222;">SLB</div>
<div class="t" style="left:27.20px;top:222.21px;font-size:13px;font-weight:bold;color:#222;transform:scale(0.9244,0.8923);-webkit-text-stroke:0.35px #222;"><span style="letter-spacing:-0.07em"><span style="font-size:1.08em;letter-spacing:-0.06em;vertical-align:-0.03em">セキュリティ</span></span></div>
<div class="t" style="left:25.92px;top:254.80px;font-size:13px;font-weight:bold;color:#222;transform:scale(0.9840,1.1000);-webkit-text-stroke:0.35px #222;">NAT</div>
<div class="t" style="left:25.93px;top:287.68px;font-size:13px;font-weight:bold;color:#222;transform:scale(0.9675,0.9154);-webkit-text-stroke:0.35px #222;"><span style="letter-spacing:-0.07em"><span style="font-size:1.08em;letter-spacing:-0.06em;vertical-align:-0.03em">ネットワーク</span></span></div>
<div class="t" style="left:25.94px;top:319.60px;font-size:13px;font-weight:bold;color:#222;transform:scale(0.9588,0.9500);-webkit-text-stroke:0.35px #222;"><span style="letter-spacing:-0.07em"><span style="font-size:1.08em;letter-spacing:-0.06em;vertical-align:-0.03em">システム</span></span></div>
<div class="t" style="left:222.70px;top:57.95px;font-size:12.5px;color:#222;transform:scale(0.8676,0.8500);-webkit-text-stroke:0.3px #222;"><span style="letter-spacing:-0.07em"><span style="font-size:1.08em;letter-spacing:-0.06em;vertical-align:-0.03em">サマリ</span></span></div>
<div class="t" style="left:277.70px;top:59.58px;font-size:12.5px;color:#222;transform:scale(0.8720,0.7846);-webkit-text-stroke:0.3px #222;"><span style="letter-spacing:-0.07em">概要</span></div>
<div class="t" style="left:320.95px;top:57.95px;font-size:12.5px;color:#222;transform:scale(0.8273,0.8500);-webkit-text-stroke:0.3px #222;"><span style="letter-spacing:-0.07em"><span style="font-size:1.08em;letter-spacing:-0.06em;vertical-align:-0.03em">コネクション</span></span></div>
<div class="t" style="left:409.40px;top:59.58px;font-size:12.5px;color:#222;transform:scale(0.8622,0.7846);-webkit-text-stroke:0.3px #222;"><span style="letter-spacing:-0.07em">攻撃防止状況</span></div>
<div class="t" style="left:338.70px;top:225.40px;font-size:11px;font-weight:bold;color:#5c5c5c;transform:scale(0.8914,1.0000);">CPU usage: 0%</div>
<div class="t" style="left:661.00px;top:225.00px;font-size:11px;font-weight:bold;color:#5c5c5c;transform:scale(0.9217,1.0000);">Memory usage: 54%</div>
<div class="t" style="left:214.00px;top:255.47px;font-size:13px;color:#364d90;transform:scale(0.9593,0.9167);-webkit-text-stroke:0.6px #364d90;"><span style="letter-spacing:-0.07em"><span style="font-size:1.08em;letter-spacing:-0.06em;vertical-align:-0.03em">パフォーマンス</span></span></div>
<div class="t" style="left:212.40px;top:283.70px;font-size:11.5px;font-weight:bold;color:#111;transform:scale(0.9395,0.9000);-webkit-text-stroke:0.35px #111;"><span style="letter-spacing:-0.07em">全体<span style="font-size:1.08em;letter-spacing:-0.06em;vertical-align:-0.03em">のスループット</span></span> Bits/sec:</div>
<div class="t" style="left:420.50px;top:284.58px;font-size:11.5px;color:#111;transform:scale(0.8941,1.0250);-webkit-text-stroke:0.15px #111;">66351448</div>
<div class="t" style="left:212.60px;top:303.29px;font-size:11.5px;font-weight:bold;color:#111;transform:scale(0.9141,1.0125);-webkit-text-stroke:0.35px #111;">L4 Conns/sec:</div>
<div class="t" style="left:420.50px;top:303.29px;font-size:11.5px;color:#111;transform:scale(0.9667,1.0125);-webkit-text-stroke:0.15px #111;">0</div>
<div class="t" style="left:212.60px;top:320.51px;font-size:11.5px;font-weight:bold;color:#111;transform:scale(0.9141,0.9875);-webkit-text-stroke:0.35px #111;">L7 Conns/sec:</div>
<div class="t" style="left:420.50px;top:320.51px;font-size:11.5px;color:#111;transform:scale(0.9667,0.9875);-webkit-text-stroke:0.15px #111;">0</div>
<div class="t" style="left:212.60px;top:338.00px;font-size:11.5px;font-weight:bold;color:#111;transform:scale(0.9178,1.0000);-webkit-text-stroke:0.35px #111;">L7 Trans/sec:</div>
<div class="t" style="left:420.50px;top:338.00px;font-size:11.5px;color:#111;transform:scale(0.9667,1.0000);-webkit-text-stroke:0.15px #111;">0</div>
<div class="t" style="left:213.50px;top:355.45px;font-size:11.5px;font-weight:bold;color:#111;transform:scale(0.9057,0.9500);-webkit-text-stroke:0.35px #111;">SSL Conns/sec:</div>
<div class="t" style="left:420.50px;top:355.45px;font-size:11.5px;color:#111;transform:scale(0.9667,0.9500);-webkit-text-stroke:0.15px #111;">0</div>
<div class="t" style="left:212.60px;top:372.40px;font-size:11.5px;font-weight:bold;color:#111;transform:scale(0.9119,1.0000);-webkit-text-stroke:0.35px #111;">IP NAT Conns/sec:</div>
<div class="t" style="left:420.50px;top:372.40px;font-size:11.5px;color:#111;transform:scale(0.9667,1.0000);-webkit-text-stroke:0.15px #111;">0</div>
<div class="t" style="left:212.40px;top:391.40px;font-size:11.5px;font-weight:bold;color:#111;transform:scale(0.9517,0.8333);-webkit-text-stroke:0.35px #111;"><span style="letter-spacing:-0.07em">全体<span style="font-size:1.08em;letter-spacing:-0.06em;vertical-align:-0.03em">の</span>新規<span style="font-size:1.08em;letter-spacing:-0.06em;vertical-align:-0.03em">コネクション</span>毎秒</span>:</div>
<div class="t" style="left:420.50px;top:391.48px;font-size:11.5px;color:#111;transform:scale(0.9667,1.0250);-webkit-text-stroke:0.15px #111;">0</div>
<div class="t" style="left:212.40px;top:412.20px;font-size:11.5px;font-weight:bold;color:#111;transform:scale(0.9496,0.8333);-webkit-text-stroke:0.35px #111;"><span style="letter-spacing:-0.07em">現在<span style="font-size:1.08em;letter-spacing:-0.06em;vertical-align:-0.03em">の</span>全<span style="font-size:1.08em;letter-spacing:-0.06em;vertical-align:-0.03em">コネクション</span>数</span>:</div>
<div class="t" style="left:420.50px;top:411.98px;font-size:11.5px;color:#111;transform:scale(0.9667,1.0250);-webkit-text-stroke:0.15px #111;">0</div>
<div class="t" style="left:214.00px;top:454.00px;font-size:13px;color:#364d90;transform:scale(1.0205,0.8462);-webkit-text-stroke:0.6px #364d90;"><span style="letter-spacing:-0.07em">攻撃防止状況</span></div>
<div class="t" style="left:211.80px;top:479.80px;font-size:11.5px;font-weight:bold;color:#111;transform:scale(0.9470,0.7833);-webkit-text-stroke:0.35px #111;"><span style="letter-spacing:-0.07em">全体<span style="font-size:1.08em;letter-spacing:-0.06em;vertical-align:-0.03em">の</span></span>SYN<span style="letter-spacing:-0.07em">受信</span>:</div>
<div class="t" style="left:420.50px;top:479.98px;font-size:11.5px;color:#111;transform:scale(0.9667,1.0250);-webkit-text-stroke:0.15px #111;">0</div>
<div class="t" style="left:211.80px;top:501.40px;font-size:11.5px;font-weight:bold;color:#111;transform:scale(0.9347,0.7500);-webkit-text-stroke:0.35px #111;"><span style="letter-spacing:-0.07em">全体<span style="font-size:1.08em;letter-spacing:-0.06em;vertical-align:-0.03em">の</span></span>SYN-Cookie Failures:</div>
<div class="t" style="left:420.50px;top:500.98px;font-size:11.5px;color:#111;transform:scale(0.9667,1.0250);-webkit-text-stroke:0.15px #111;">0</div>
<div class="t" style="left:212.60px;top:539.22px;font-size:13px;color:#364d90;transform:scale(0.9547,0.9846);-webkit-text-stroke:0.6px #364d90;"><span style="letter-spacing:-0.07em"><span style="font-size:1.08em;letter-spacing:-0.06em;vertical-align:-0.03em">ヘルスチェック</span>状況</span></div>
<div class="t" style="left:212.00px;top:563.68px;font-size:11.5px;font-weight:bold;color:#111;transform:scale(0.9459,0.9182);-webkit-text-stroke:0.35px #111;"><span style="letter-spacing:-0.07em"><span style="font-size:1.08em;letter-spacing:-0.06em;vertical-align:-0.03em">サーバ</span></span>:</div>
<div class="t" style="left:212.00px;top:585.50px;font-size:11.5px;font-weight:bold;color:#111;transform:scale(0.9408,0.9083);-webkit-text-stroke:0.35px #111;"><span style="letter-spacing:-0.07em"><span style="font-size:1.08em;letter-spacing:-0.06em;vertical-align:-0.03em">サーバポート</span></span>:</div>
<div class="t" style="left:387.00px;top:565.12px;font-size:11.5px;color:#111;transform:scale(0.9833,1.0750);-webkit-text-stroke:0.15px #111;">0</div>
<div class="t" style="left:428.70px;top:565.12px;font-size:11.5px;color:#111;transform:scale(0.9167,1.0750);-webkit-text-stroke:0.15px #111;">0</div>
<div class="t" style="left:387.00px;top:586.12px;font-size:11.5px;color:#111;transform:scale(0.9833,1.0750);-webkit-text-stroke:0.15px #111;">0</div>
<div class="t" style="left:428.70px;top:586.12px;font-size:11.5px;color:#111;transform:scale(0.9167,1.0750);-webkit-text-stroke:0.15px #111;">0</div>
<div class="t" style="left:555.74px;top:257.67px;font-size:13px;color:#364d90;transform:scale(0.9576,0.9667);-webkit-text-stroke:0.6px #364d90;">HTTP</div>
<div class="t" style="left:588.02px;top:259.20px;font-size:13px;color:#364d90;transform:scale(0.9784,0.6643);-webkit-text-stroke:0.6px #364d90;"><span style="letter-spacing:-0.07em"><span style="font-size:1.08em;letter-spacing:-0.06em;vertical-align:-0.03em">プロキシ</span></span></div>
<div class="t" style="left:553.04px;top:285.60px;font-size:11.5px;font-weight:bold;color:#111;transform:scale(0.9598,0.7833);-webkit-text-stroke:0.35px #111;"><span style="letter-spacing:-0.07em"><span style="font-size:1.08em;letter-spacing:-0.06em;vertical-align:-0.03em">コネクション</span>合計</span>:</div>
<div class="t" style="left:554.00px;top:306.40px;font-size:11.5px;font-weight:bold;color:#111;transform:scale(0.9519,0.8333);-webkit-text-stroke:0.35px #111;"><span style="letter-spacing:-0.07em">現在<span style="font-size:1.08em;letter-spacing:-0.06em;vertical-align:-0.03em">のコネクション</span></span>:</div>
<div class="t" style="left:554.00px;top:327.20px;font-size:11.5px;font-weight:bold;color:#111;transform:scale(0.9449,0.8167);-webkit-text-stroke:0.35px #111;"><span style="letter-spacing:-0.07em"><span style="font-size:1.08em;letter-spacing:-0.06em;vertical-align:-0.03em">サーバコネクション</span>合計</span>:</div>
<div class="t" style="left:761.80px;top:286.06px;font-size:11.5px;color:#111;transform:scale(0.9833,1.0375);-webkit-text-stroke:0.15px #111;">0</div>
<div class="t" style="left:761.80px;top:307.03px;font-size:11.5px;color:#111;transform:scale(0.9833,1.0750);-webkit-text-stroke:0.15px #111;">0</div>
<div class="t" style="left:761.80px;top:328.03px;font-size:11.5px;color:#111;transform:scale(0.9833,1.0750);-webkit-text-stroke:0.15px #111;">0</div>
<div class="t" style="left:554.75px;top:359.05px;font-size:13px;color:#364d90;transform:scale(0.9727,0.8750);-webkit-text-stroke:0.6px #364d90;"><span style="letter-spacing:-0.07em"><span style="font-size:1.08em;letter-spacing:-0.06em;vertical-align:-0.03em">コネクションリユース</span></span></div>
<div class="t" style="left:554.00px;top:387.70px;font-size:11.5px;font-weight:bold;color:#111;transform:scale(0.9490,0.9167);-webkit-text-stroke:0.35px #111;"><span style="letter-spacing:-0.07em"><span style="font-size:1.08em;letter-spacing:-0.06em;vertical-align:-0.03em">パーシストコネクション</span>総数</span>:</div>
<div class="t" style="left:761.80px;top:388.46px;font-size:11.5px;color:#111;transform:scale(0.9833,1.0375);-webkit-text-stroke:0.15px #111;">0</div>
<div class="t" style="left:553.05px;top:409.20px;font-size:11.5px;font-weight:bold;color:#111;transform:scale(0.9507,0.7923);-webkit-text-stroke:0.35px #111;"><span style="letter-spacing:-0.07em"><span style="font-size:1.08em;letter-spacing:-0.06em;vertical-align:-0.03em">アクティブなパーシステンスコネクション</span></span></div>
<div class="t" style="left:554.00px;top:427.62px;font-size:11.5px;font-weight:bold;color:#111;transform:scale(0.9643,0.8167);-webkit-text-stroke:0.35px #111;"><span style="letter-spacing:-0.07em">数</span>:</div>
<div class="t" style="left:761.80px;top:417.46px;font-size:11.5px;color:#111;transform:scale(0.9833,1.0375);-webkit-text-stroke:0.15px #111;">0</div>
<div class="t" style="left:554.30px;top:457.60px;font-size:13px;color:#364d90;transform:scale(1.0082,0.8692);-webkit-text-stroke:0.6px #364d90;"><span style="letter-spacing:-0.07em">圧縮状況</span></div>
<div class="t" style="left:554.00px;top:480.30px;font-size:11.5px;font-weight:bold;color:#111;transform:scale(0.9479,0.9167);-webkit-text-stroke:0.35px #111;"><span style="letter-spacing:-0.07em">入力<span style="font-size:1.08em;letter-spacing:-0.06em;vertical-align:-0.03em">データレート</span></span> <span style="letter-spacing:-0.07em"><span style="font-size:1.08em;letter-spacing:-0.06em;vertical-align:-0.03em">バイト</span></span>/<span style="letter-spacing:-0.07em">秒</span>:</div>
<div class="t" style="left:554.00px;top:501.00px;font-size:11.5px;font-weight:bold;color:#111;transform:scale(0.9479,0.9667);-webkit-text-stroke:0.35px #111;"><span style="letter-spacing:-0.07em">出力<span style="font-size:1.08em;letter-spacing:-0.06em;vertical-align:-0.03em">データレート</span></span> <span style="letter-spacing:-0.07em"><span style="font-size:1.08em;letter-spacing:-0.06em;vertical-align:-0.03em">バイト</span></span>/<span style="letter-spacing:-0.07em">秒</span>:</div>
<div class="t" style="left:554.00px;top:523.50px;font-size:11.5px;font-weight:bold;color:#111;transform:scale(0.9458,0.9000);-webkit-text-stroke:0.35px #111;"><span style="letter-spacing:-0.07em">帯域節約率</span>:</div>
<div class="t" style="left:761.80px;top:481.46px;font-size:11.5px;color:#111;transform:scale(0.9833,1.0375);-webkit-text-stroke:0.15px #111;">0</div>
<div class="t" style="left:761.80px;top:502.46px;font-size:11.5px;color:#111;transform:scale(0.9833,1.0375);-webkit-text-stroke:0.15px #111;">0</div>
<div class="t" style="left:761.80px;top:523.46px;font-size:11.5px;color:#111;transform:scale(0.8941,1.0375);-webkit-text-stroke:0.15px #111;">0%</div>
<div class="t" style="left:553.36px;top:552.42px;font-size:13px;color:#364d90;transform:scale(0.9405,0.8846);-webkit-text-stroke:0.6px #364d90;"><span style="letter-spacing:-0.07em"><span style="font-size:1.08em;letter-spacing:-0.06em;vertical-align:-0.03em">キャッシング</span></span></div>
<div class="t" style="left:552.03px;top:577.80px;font-size:11.5px;font-weight:bold;color:#111;transform:scale(0.9848,0.8167);-webkit-text-stroke:0.35px #111;"><span style="letter-spacing:-0.07em"><span style="font-size:1.08em;letter-spacing:-0.06em;vertical-align:-0.03em">ヒット</span>率</span>:</div>
<div class="t" style="left:552.08px;top:598.00px;font-size:11.5px;font-weight:bold;color:#111;transform:scale(0.9625,0.9000);-webkit-text-stroke:0.35px #111;"><span style="letter-spacing:-0.07em"><span style="font-size:1.08em;letter-spacing:-0.06em;vertical-align:-0.03em">リクエスト</span>合計</span>:</div>
<div class="t" style="left:553.05px;top:619.40px;font-size:11.5px;font-weight:bold;color:#111;transform:scale(0.9525,0.8750);-webkit-text-stroke:0.35px #111;"><span style="letter-spacing:-0.07em"><span style="font-size:1.08em;letter-spacing:-0.06em;vertical-align:-0.03em">キャッシュされたオブジェクト</span></span>:</div>
<div class="t" style="left:761.80px;top:578.46px;font-size:11.5px;color:#111;transform:scale(0.8941,1.0375);-webkit-text-stroke:0.15px #111;">0%</div>
<div class="t" style="left:761.80px;top:599.46px;font-size:11.5px;color:#111;transform:scale(0.9833,1.0375);-webkit-text-stroke:0.15px #111;">0</div>
<div class="t" style="left:761.80px;top:620.46px;font-size:11.5px;color:#111;transform:scale(0.9833,1.0375);-webkit-text-stroke:0.15px #111;">0</div>
</body>
</html>
